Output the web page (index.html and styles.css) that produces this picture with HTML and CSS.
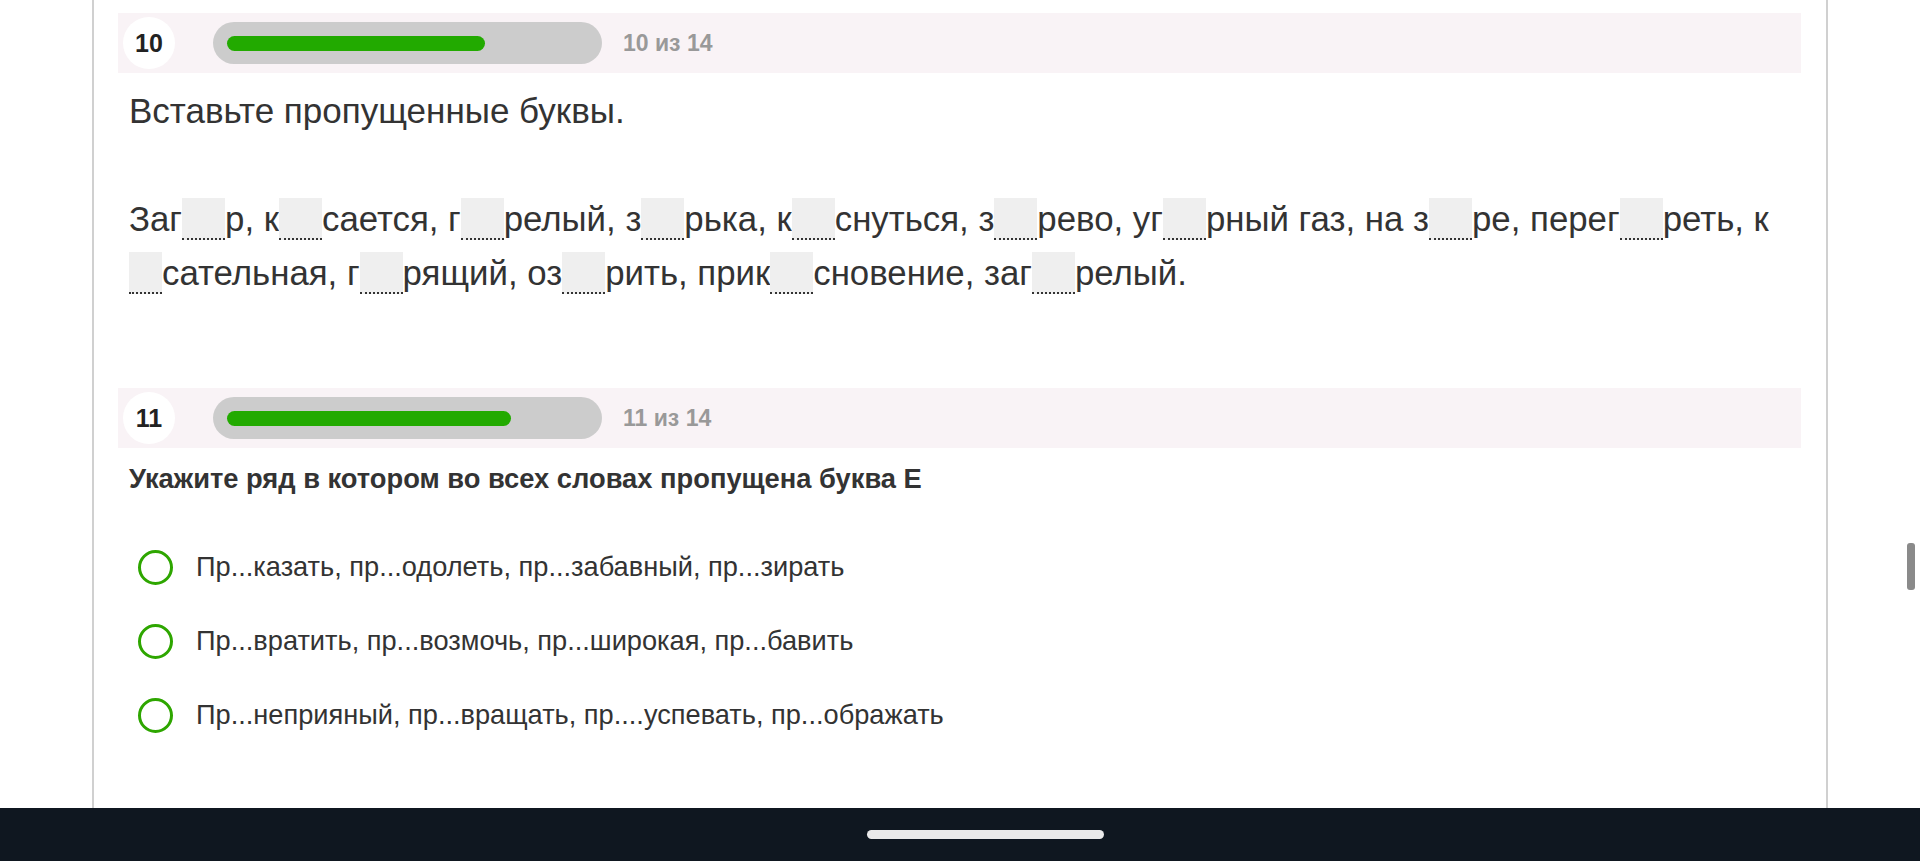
FILE: index.html
```html
<!DOCTYPE html>
<html lang="ru">
<head>
<meta charset="utf-8">
<title>Тест</title>
<link rel="stylesheet" href="styles.css">
</head>
<body>
<div class="screen">
  <main class="sheet">
    <section class="task">
      <div class="task-head">
        <span class="num">10</span>
        <div class="track"><div class="fill" style="width:71.43%"></div></div>
        <span class="count">10 из 14</span>
      </div>
      <p class="task-title">Вставьте пропущенные буквы.</p>
      <p class="gaps-text">Заг<span class="gap"></span>р, к<span class="gap"></span>сается, г<span class="gap"></span>релый, з<span class="gap"></span>рька, к<span class="gap"></span>снуться, з<span class="gap"></span>рево, уг<span class="gap"></span>рный газ, на з<span class="gap"></span>ре, перег<span class="gap"></span>реть, к<span class="gap gap-start"></span>сательная, г<span class="gap"></span>рящий, оз<span class="gap"></span>рить, прик<span class="gap"></span>сновение, заг<span class="gap"></span>релый.</p>
    </section>
    <section class="task task-choice">
      <div class="task-head">
        <span class="num">11</span>
        <div class="track"><div class="fill" style="width:78.57%"></div></div>
        <span class="count">11 из 14</span>
      </div>
      <p class="question">Укажите ряд в котором во всех словах пропущена буква Е</p>
      <ul class="options">
        <li class="option"><span class="radio"></span><span class="option-text">Пр...казать, пр...одолеть, пр...забавный, пр...зирать</span></li>
        <li class="option"><span class="radio"></span><span class="option-text">Пр...вратить, пр...возмочь, пр...широкая, пр...бавить</span></li>
        <li class="option"><span class="radio"></span><span class="option-text">Пр...неприяный, пр...вращать, пр....успевать, пр...ображать</span></li>
      </ul>
    </section>
  </main>
  <div class="nav-bar"><span class="home-indicator"></span></div>
  <div class="scroll-indicator"></div>
</div>
</body>
</html>
```
FILE: styles.css
```css
* { box-sizing: border-box; }
html, body { margin: 0; padding: 0; }
body {
  font-family: "Liberation Sans", Arial, sans-serif;
  color: #333;
  background: #fff;
}
.screen {
  position: relative;
  width: 1920px;
  height: 861px;
  display: flex;
  flex-direction: column;
  overflow: hidden;
}
.sheet {
  flex: 1;
  margin-left: 92px;
  width: 1736px;
  border-left: 2px solid #d0d0d0;
  border-right: 2px solid #d0d0d0;
  padding: 13px 25px 0 24px;
  overflow: hidden;
}
.task-head {
  height: 60px;
  background: #f9f3f6;
  display: flex;
  align-items: center;
  padding-left: 5px;
}
.num {
  width: 52px;
  height: 52px;
  border-radius: 50%;
  background: #fff;
  display: flex;
  align-items: center;
  justify-content: center;
  font-weight: bold;
  font-size: 25px;
  color: #222;
}
.track {
  margin-left: 38px;
  width: 389px;
  height: 42px;
  border-radius: 21px;
  background: #cccccc;
  padding: 0 14px;
  display: flex;
  align-items: center;
}
.fill {
  height: 15px;
  border-radius: 8px;
  background: #22aa00;
}
.count {
  margin-left: 21px;
  font-weight: bold;
  font-size: 23px;
  color: #999;
}
.task-title {
  margin: 19px 0 0 11px;
  font-size: 35px;
  line-height: 38px;
}
.gaps-text {
  margin: 62px 20px 0 11px;
  font-size: 34.8px;
  line-height: 54px;
}
.gap {
  display: inline-block;
  width: 43px;
  height: 42px;
  vertical-align: -9px;
  background: #efefef;
  border-bottom: 2px dotted #333;
}
.gap-start { width: 33px; }
.task-choice { margin-top: 88px; }
.question {
  margin: 16px 0 0 11px;
  font-size: 27.3px;
  line-height: 30px;
  font-weight: bold;
}
.options {
  list-style: none;
  margin: 36px 0 0 0;
  padding: 0 0 0 20px;
}
.option {
  height: 74px;
  display: flex;
  align-items: center;
}
.radio {
  width: 35px;
  height: 35px;
  border-radius: 50%;
  border: 3px solid #2ea600;
  flex: none;
}
.option-text {
  margin-left: 23px;
  font-size: 27.2px;
}
.nav-bar {
  height: 53px;
  background: #0f1720;
  display: flex;
  justify-content: center;
  padding-top: 22px;
}
.home-indicator {
  width: 237px;
  height: 9px;
  border-radius: 5px;
  background: #eaeaea;
  margin-left: 50px;
}
.scroll-indicator {
  position: absolute;
  left: 1907px;
  top: 543px;
  width: 8px;
  height: 47px;
  border-radius: 3px;
  background: #8a8a8a;
}
```
